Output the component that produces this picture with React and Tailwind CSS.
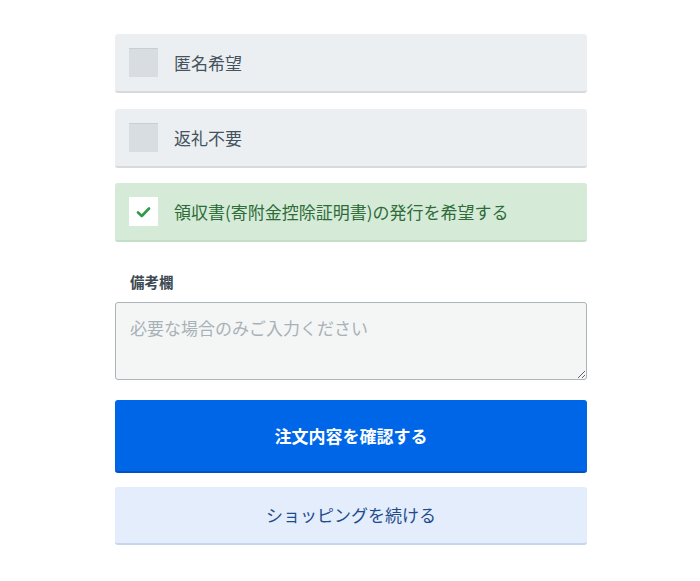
import React from 'react'

const font = { fontFamily: '"Noto Sans CJK JP", "Noto Sans", sans-serif' }

const Check = ({ checked }) => {
    if (checked) {
        return (
            <span className="flex h-[29px] w-[29px] shrink-0 items-center justify-center bg-white">
                <svg width="15" height="12" viewBox="0 0 15 12">
                    <path d="M2 6.5 L5.8 10 L13 2.5" fill="none" stroke="#2f9a48" strokeWidth="2.6" strokeLinecap="round" strokeLinejoin="round" />
                </svg>
            </span>
        )
    }
    return <span className="h-[29px] w-[29px] shrink-0 border-t border-[#c8cfd4] bg-[#d7dde1]" />
}

const Option = ({ label, checked }) => (
    <label
        className={
            "flex h-[59px] items-center gap-[16px] rounded-[3px] border-b-2 px-[14px] " +
            (checked
                ? "border-[#c3dfc7] bg-[#d5ebd8] text-[#2f6b39]"
                : "border-[#d6dadd] bg-[#eceff1] text-[#44535d]")
        }
    >
        <Check checked={checked} />
        <span className="text-[17px] leading-none">{label}</span>
    </label>
)

const App = () => {
    return (
        <div className="flex min-h-[581px] justify-center bg-white pt-[34px] pl-[2px]" style={font}>
            <div className="flex w-[472px] flex-col">
                <div className="flex flex-col gap-[15.5px]">
                    <Option label="匿名希望" />
                    <Option label="返礼不要" />
                    <Option label="領収書(寄附金控除証明書)の発行を希望する" checked />
                </div>

                <p className="mt-[30px] px-[15px] text-[14.5px] font-bold leading-[20px] text-[#3b4953]">備考欄</p>
                <textarea
                    className="mt-[10px] h-[78px] w-full resize-y rounded-[3px] border border-[#aab4b9] bg-[#f4f6f6] px-[14px] pt-[12px] text-[17px] leading-[26px] text-[#333] outline-none placeholder:text-[#a9b1b6]"
                    placeholder="必要な場合のみご入力ください"
                />

                <button className="mt-[20px] h-[73px] w-full rounded-[3px] border-b-2 border-[#0252c4] bg-[#0066e8] text-[17px] font-bold text-white">
                    注文内容を確認する
                </button>
                <button className="mt-[14px] h-[58px] w-full rounded-[3px] border-b-2 border-[#c6d6ef] bg-[#e3edfc] text-[17px] text-[#1f4b8c]">
                    ショッピングを続ける
                </button>
            </div>
        </div>
    )
}

export default App
